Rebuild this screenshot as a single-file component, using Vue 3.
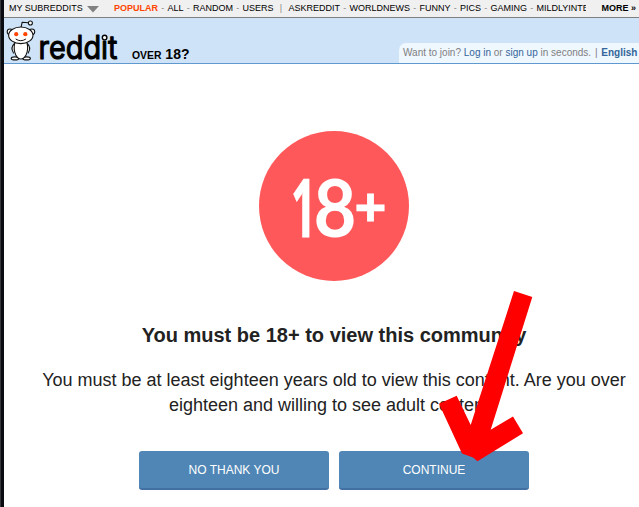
<script setup>
const primary = ['ALL', 'RANDOM', 'USERS']
const subs = ['ASKREDDIT', 'WORLDNEWS', 'FUNNY', 'PICS', 'GAMING', 'MILDLYINTE']
</script>

<template>
  <div class="page">
    <nav class="topbar">
      <span class="mine">MY SUBREDDITS</span>
      <svg class="caret" width="12" height="7" viewBox="0 0 12 7"><path d="M0 0H12L6 6.5Z" fill="#808080" /></svg>
      <div class="list">
        <b class="popular">POPULAR</b>
        <template v-for="s in primary" :key="s"><i>-</i><span>{{ s }}</span></template>
        <i class="bar">|</i>
        <template v-for="(s, n) in subs" :key="s"><i v-if="n">-</i><span>{{ s }}</span></template>
      </div>
      <b class="more">MORE »</b>
    </nav>

    <header class="header">
      <svg class="logo" width="116" height="45" viewBox="0 0 116 45">
        <g fill="#fff" stroke="#111" stroke-width="1.1" stroke-linejoin="round" stroke-linecap="round">
          <path d="M17 9.5L18.2 4.2L24 4.8" fill="none" />
          <circle cx="26.4" cy="5" r="2" />
          <circle cx="6" cy="13.8" r="2.8" />
          <circle cx="27.9" cy="13.8" r="2.8" />
          <ellipse cx="11" cy="40.4" rx="3.8" ry="1.5" />
          <ellipse cx="22.6" cy="40.4" rx="3.8" ry="1.5" />
          <path d="M10.5 25.5Q6 29.5 9.5 35M23.2 25.5Q27.6 29.5 24.2 35" />
          <path d="M11 24H22.8Q24.8 31 22 37Q20 41 16.9 41Q13.8 41 11.8 37Q9 31 11 24Z" />
          <ellipse cx="16.8" cy="17.3" rx="12.2" ry="8.3" />
          <path d="M12 21.2Q16.8 24.4 21.6 21.2" fill="none" stroke-width="1" />
        </g>
        <circle cx="12.2" cy="16.2" r="2.1" fill="#ff4500" />
        <circle cx="21.3" cy="16.2" r="2.1" fill="#ff4500" />
        <text class="wordmark" x="34.5" y="41.3" textLength="79" lengthAdjust="spacingAndGlyphs">redd&#305;t</text>
        <circle cx="100.6" cy="19.6" r="2.3" fill="#fff" stroke="#000" stroke-width="1.4" />
      </svg>
      <div class="pagename"><span>OVER</span> 18?</div>
      <div class="user">Want to join? <a>Log in</a> or <a>sign up</a> in seconds.<em>|</em><a class="lang">English</a></div>
    </header>

    <main class="content">
      <svg class="age" width="150" height="150" viewBox="0 0 150 150">
        <circle cx="75" cy="75" r="75" fill="#ff585b" />
        <text class="one" x="32" y="105.5" textLength="25" lengthAdjust="spacingAndGlyphs">1</text>
        <text class="eight" x="54.5" y="105.5" textLength="43" lengthAdjust="spacingAndGlyphs">8</text>
        <text class="plus" x="95.5" y="95.5">+</text>
      </svg>
      <h1>You must be 18+ to view this community</h1>
      <p>You must be at least eighteen years old to view this content. Are you over eighteen and willing to see adult content?</p>
      <div class="buttons">
        <button>NO THANK YOU</button>
        <button>CONTINUE</button>
      </div>
    </main>

    <svg class="arrow" width="86" height="172" viewBox="438 290 86 172">
      <path fill="#f00" d="M514 291L532.3 297L490.7 429.7L513 416.5L523 433.3L477.5 461.3L473 457.5L462 453.5L439 403.7L456.7 395.7L470.7 425Z" />
    </svg>
  </div>
</template>

<style>
body { background: #fff; overflow: hidden; }
</style>

<style scoped>
.page {
  position: relative;
  box-sizing: border-box;
  width: 639px;
  height: 507px;
  padding-left: 4px;
  overflow: hidden;
  background: linear-gradient(90deg, #34383b 1px, #0b0c12 1px, #0b0c12 4px, #fff 4px);
  font-family: "Liberation Sans", Arial, sans-serif;
  color: #222;
}
.topbar {
  display: flex;
  align-items: center;
  box-sizing: border-box;
  height: 18px;
  padding: 0 3px 1px 5px;
  border-bottom: 1px solid #808080;
  background: #f0f0f0;
  font-size: 9px;
  line-height: 16px;
  white-space: nowrap;
  color: #000;
}
.mine { width: 78px; }
.caret { margin-top: 2px; }
.list {
  display: flex;
  gap: 3.25px;
  width: 472px;
  margin-left: 15px;
  overflow: hidden;
}
.list i { font-style: normal; color: #888; }
.list .bar { margin: 0 3px; }
.popular { color: #ff4500; }
.more { margin-left: auto; }
.header {
  display: flex;
  align-items: flex-end;
  box-sizing: border-box;
  height: 46px;
  border-bottom: 1px solid #5f99cf;
  background: #cee3f8;
}
.logo { align-self: flex-start; overflow: visible; }
.wordmark {
  font-family: Inter, sans-serif;
  font-size: 32.5px;
  font-weight: 400;
  fill: #000;
  stroke: #000;
  stroke-width: 1.1;
  stroke-linejoin: round;
}
.pagename {
  margin-left: 12px;
  font-size: 14px;
  font-weight: bold;
  line-height: 15px;
  padding-bottom: 0;
  color: #000;
}
.pagename span { font-size: 10.4px; }
.user {
  box-sizing: border-box;
  width: 240px;
  height: 20px;
  margin-left: auto;
  padding-left: 4px;
  border-top-left-radius: 7px;
  background: #eff7ff;
  font-size: 10px;
  line-height: 19px;
  white-space: nowrap;
  color: #808080;
}
.user a { color: #369; }
.user em { margin: 0 3.8px; font-style: normal; }
.user .lang { font-weight: bold; }
.content {
  display: flex;
  flex-direction: column;
  align-items: center;
  padding: 67px 10px 0 35px;
}
.age text {
  font-family: "Open Sans", sans-serif;
  font-weight: 700;
  fill: #fff;
}
.age .one { font-size: 81px; stroke: #fff; stroke-width: 0.8; }
.age .eight { font-family: Lato, sans-serif; font-size: 81px; }
.age .plus { font-size: 56px; stroke: #fff; stroke-width: 0.8; }
h1 {
  margin: 42px 0 0;
  font-size: 20px;
  line-height: 24px;
}
p {
  width: 590px;
  margin: 21px 0 0;
  font-size: 18px;
  line-height: 25px;
  text-align: center;
}
.buttons {
  display: flex;
  gap: 10px;
  margin-top: 33px;
}
button {
  box-sizing: border-box;
  width: 190px;
  height: 39px;
  padding: 0;
  border: 0;
  border-bottom: 2px solid #4270a2;
  border-radius: 3px;
  background: #4f86b5;
  font: 12px "Liberation Sans", Arial, sans-serif;
  color: #fff;
}
.arrow {
  position: absolute;
  left: 438px;
  top: 290px;
  overflow: visible;
}
</style>
